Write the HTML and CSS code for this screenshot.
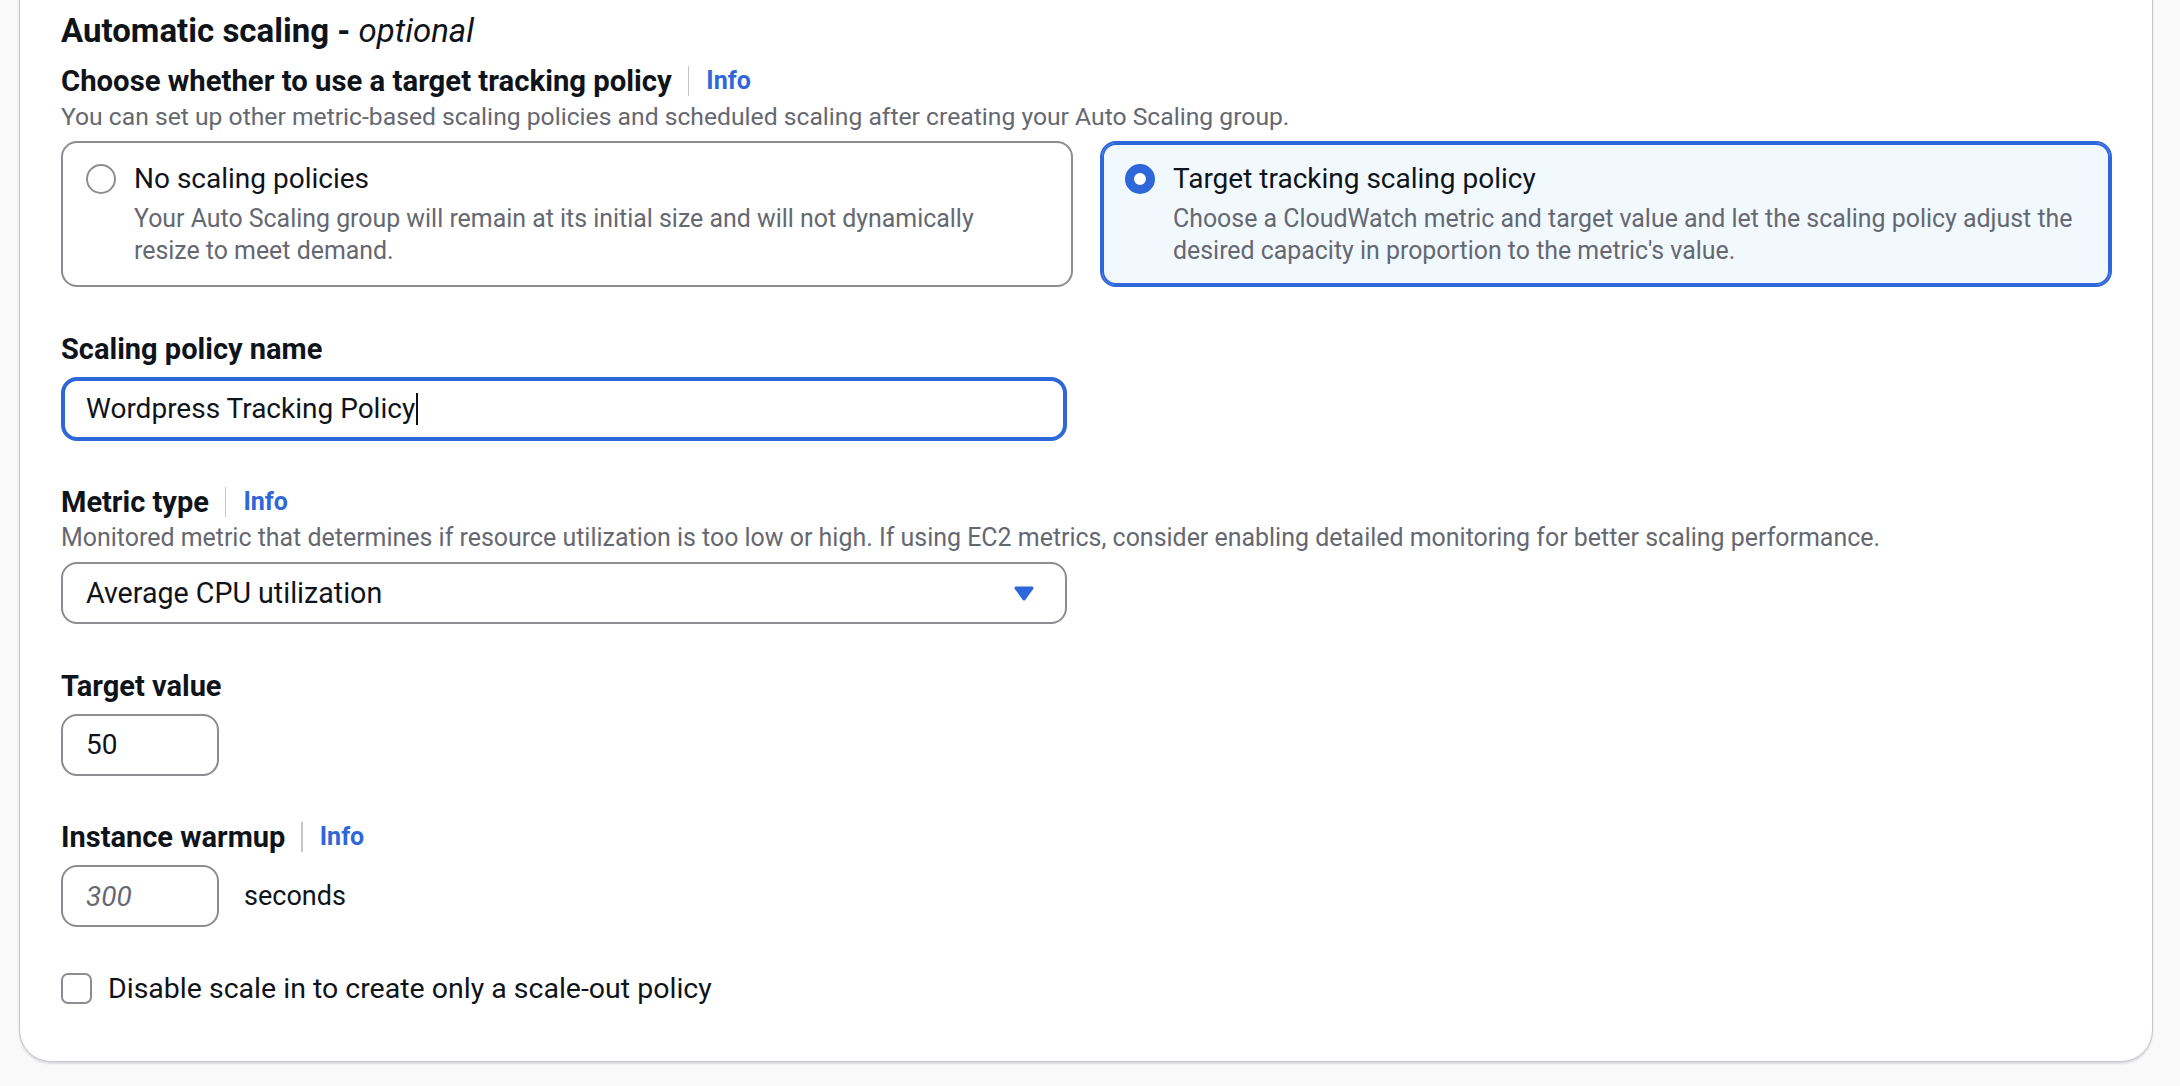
FILE: index.html
```html
<!DOCTYPE html>
<html lang="en">
<head>
<meta charset="utf-8">
<title>Automatic scaling</title>
<link rel="stylesheet" href="styles.css">
</head>
<body>
<div class="page">
  <section class="container">
    <h2 class="heading">Automatic scaling - <i>optional</i></h2>

    <div class="field">
      <div class="label-row">
        <span class="label">Choose whether to use a target tracking policy</span>
        <span class="divider"></span>
        <a class="info">Info</a>
      </div>
      <div class="desc">You can set up other metric-based scaling policies and scheduled scaling after creating your Auto Scaling group.</div>
      <div class="control tiles">
        <div class="tile">
          <span class="radio"></span>
          <div class="tile-text">
            <div class="tile-title">No scaling policies</div>
            <div class="tile-desc">Your Auto Scaling group will remain at its initial size and will not dynamically<br>resize to meet demand.</div>
          </div>
        </div>
        <div class="tile selected">
          <span class="radio checked"></span>
          <div class="tile-text">
            <div class="tile-title">Target tracking scaling policy</div>
            <div class="tile-desc">Choose a CloudWatch metric and target value and let the scaling policy adjust the<br>desired capacity in proportion to the metric's value.</div>
          </div>
        </div>
      </div>
    </div>

    <div class="field">
      <div class="label-row">
        <span class="label">Scaling policy name</span>
      </div>
      <div class="control input wide focused">Wordpress Tracking Policy<span class="caret"></span></div>
    </div>

    <div class="field">
      <div class="label-row">
        <span class="label">Metric type</span>
        <span class="divider"></span>
        <a class="info">Info</a>
      </div>
      <div class="desc desc-long">Monitored metric that determines if resource utilization is too low or high. If using EC2 metrics, consider enabling detailed monitoring for better scaling performance.</div>
      <div class="control input wide select">
        <span>Average CPU utilization</span>
        <svg class="caret-down" width="22" height="17" viewBox="0 0 22 17" aria-hidden="true">
          <path d="M3 3 L19 3 L11 14 Z" fill="#2e67d9" stroke="#2e67d9" stroke-width="3" stroke-linejoin="round"/>
        </svg>
      </div>
    </div>

    <div class="field">
      <div class="label-row">
        <span class="label">Target value</span>
      </div>
      <div class="control input small">50</div>
    </div>

    <div class="field">
      <div class="label-row">
        <span class="label">Instance warmup</span>
        <span class="divider"></span>
        <a class="info">Info</a>
      </div>
      <div class="control inline">
        <div class="input small placeholder">300</div>
        <span class="unit">seconds</span>
      </div>
    </div>

    <div class="field check-row">
      <span class="checkbox"></span>
      <span class="check-label">Disable scale in to create only a scale-out policy</span>
    </div>
  </section>
</div>
</body>
</html>
```

FILE: styles.css
```css
html {
  overflow: hidden;
  background: #f9f9fa;
}

body {
  margin: 0;
  padding: 0;
  background: #f9f9fa;
  font-family: Roboto, "Noto Sans", Arial, sans-serif;
  color: #0f141a;
}

.page {
  display: flow-root;
  width: 2180px;
  height: 1086px;
  padding-left: 19px;
  box-sizing: border-box;
}

.container {
  width: 2134px;
  margin-top: -32px;
  box-sizing: border-box;
  background: #ffffff;
  border: 1.5px solid #c6c6cd;
  border-radius: 32px;
  box-shadow: 0 2px 2px rgba(0, 7, 22, 0.12);
  padding: 40px 40px 52px 41px;
}

.heading {
  margin: 0 0 8px 0;
  font-size: 33px;
  line-height: 44px;
  font-weight: 700;
}

.heading i {
  font-weight: 400;
  font-style: italic;
}

.field {
  margin-top: 41.5px;
}

.heading + .field {
  margin-top: 0;
}

.label-row {
  display: flex;
  align-items: center;
  height: 40px;
}

.label {
  font-size: 29px;
  line-height: 40px;
  font-weight: 700;
}

.heading + .field .label {
  font-size: 29.3px;
}

.divider {
  width: 1.5px;
  height: 30px;
  background: #c6c6cd;
  margin: 0 17px 0 16px;
}

.info {
  font-size: 25px;
  font-weight: 700;
  color: #2e67d9;
  line-height: 40px;
}

.desc {
  font-size: 24.7px;
  line-height: 32px;
  color: #656871;
}

.desc-long {
  font-size: 24.95px;
}

.control {
  margin-top: 8px;
}

.tiles {
  display: grid;
  grid-template-columns: 1fr 1fr;
  column-gap: 27px;
}

.tile {
  display: flex;
  align-items: flex-start;
  gap: 18px;
  box-sizing: border-box;
  height: 146px;
  border: 2px solid #8c8c94;
  border-radius: 16px;
  padding: 16px 22px 18px 23px;
  background: #ffffff;
}

.tile.selected {
  border-color: #2e67d9;
  box-shadow: inset 0 0 0 2px #2e67d9;
  background: #f1f8fe;
}

.radio {
  flex: 0 0 auto;
  width: 30px;
  height: 30px;
  box-sizing: border-box;
  border: 2px solid #8c8c94;
  border-radius: 50%;
  background: #ffffff;
  margin-top: 5px;
}

.radio.checked {
  border: 9px solid #2e67d9;
}

.tile-title {
  font-size: 28px;
  line-height: 40px;
}

.tile-desc {
  margin-top: 4px;
  font-size: 24.9px;
  line-height: 32px;
  color: #656871;
}

.input {
  box-sizing: border-box;
  height: 62px;
  border: 2px solid #8c8c94;
  border-radius: 16px;
  background: #ffffff;
  display: flex;
  align-items: center;
  padding-left: 23px;
  font-size: 28px;
  color: #0f141a;
}

.input.wide {
  width: 1006px;
}

.input.focused {
  height: 64px;
  border: 4px solid #2e67d9;
  padding-left: 21px;
}

.caret {
  display: inline-block;
  width: 2px;
  height: 32px;
  background: #0f141a;
  margin-left: 1px;
}

.select {
  justify-content: space-between;
  padding-right: 30px;
  font-size: 28.6px;
}

.caret-down {
  display: block;
}

.input.small {
  width: 158px;
}

.placeholder {
  font-style: italic;
  color: #656871;
}

.inline {
  display: flex;
  align-items: center;
  gap: 25px;
}

.unit {
  font-size: 27px;
}

.check-row {
  display: flex;
  align-items: center;
  height: 40px;
  gap: 16px;
}

.checkbox {
  width: 31px;
  height: 31px;
  box-sizing: border-box;
  border: 2px solid #8c8c94;
  border-radius: 7px;
  background: #ffffff;
}

.check-label {
  font-size: 28.5px;
  line-height: 40px;
}
```
